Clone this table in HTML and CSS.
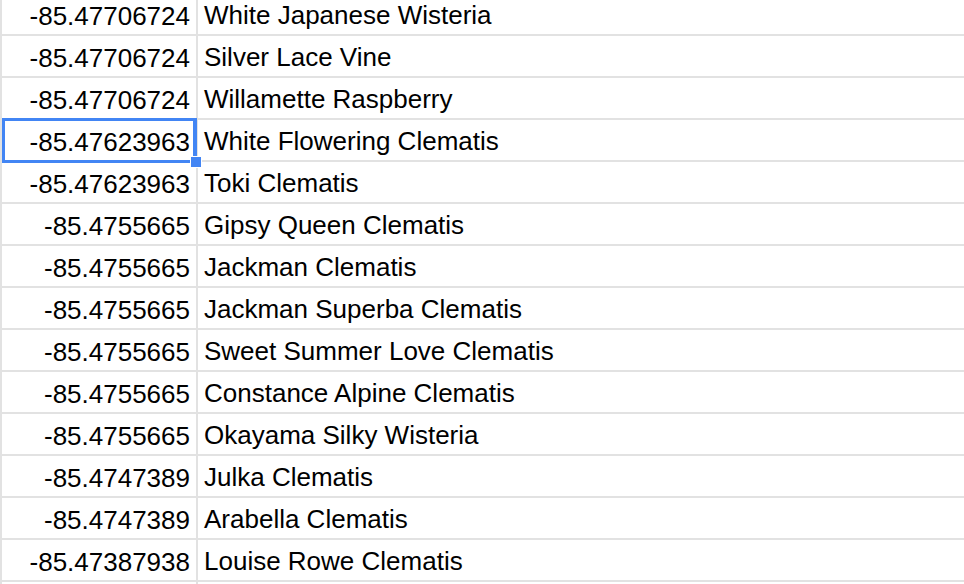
FILE: index.html
```
<!DOCTYPE html>
<html>
<head>
<meta charset="utf-8">
<link rel="stylesheet" href="styles.css">
</head>
<body>
<div class="sheet">
  <div class="row"><div class="cell num">-85.47706724</div><div class="cell txt">White Japanese Wisteria</div></div>
  <div class="row"><div class="cell num">-85.47706724</div><div class="cell txt">Silver Lace Vine</div></div>
  <div class="row"><div class="cell num">-85.47706724</div><div class="cell txt">Willamette Raspberry</div></div>
  <div class="row"><div class="cell num selected">-85.47623963<span class="sel-box"></span><span class="sel-handle"></span></div><div class="cell txt">White Flowering Clematis</div></div>
  <div class="row"><div class="cell num">-85.47623963</div><div class="cell txt">Toki Clematis</div></div>
  <div class="row"><div class="cell num">-85.4755665</div><div class="cell txt">Gipsy Queen Clematis</div></div>
  <div class="row"><div class="cell num">-85.4755665</div><div class="cell txt">Jackman Clematis</div></div>
  <div class="row"><div class="cell num">-85.4755665</div><div class="cell txt">Jackman Superba Clematis</div></div>
  <div class="row"><div class="cell num">-85.4755665</div><div class="cell txt">Sweet Summer Love Clematis</div></div>
  <div class="row"><div class="cell num">-85.4755665</div><div class="cell txt">Constance Alpine Clematis</div></div>
  <div class="row"><div class="cell num">-85.4755665</div><div class="cell txt">Okayama Silky Wisteria</div></div>
  <div class="row"><div class="cell num">-85.4747389</div><div class="cell txt">Julka Clematis</div></div>
  <div class="row"><div class="cell num">-85.4747389</div><div class="cell txt">Arabella Clematis</div></div>
  <div class="row"><div class="cell num">-85.47387938</div><div class="cell txt">Louise Rowe Clematis</div></div>
  <div class="row"><div class="cell num"></div><div class="cell txt"></div></div>
</div>
</body>
</html>
```
FILE: styles.css
```
html, body {
  margin: 0;
  padding: 0;
  background: #ffffff;
  overflow: hidden;
}
body {
  width: 964px;
  height: 584px;
  font-family: "Liberation Sans", Arial, Helvetica, sans-serif;
  font-size: 26px;
  color: #000000;
}
.sheet {
  margin-top: -8px;
  height: 592px;
  overflow: hidden;
  display: flex;
  flex-direction: column;
}
.row {
  display: flex;
  flex: none;
  height: 40px;
  border-top: 2px solid #e2e2e2;
}
.cell {
  display: flex;
  align-items: center;
  height: 40px;
  box-sizing: border-box;
  padding-top: 2px;
  white-space: nowrap;
}
.num {
  box-sizing: content-box;
  width: 188px;
  padding-right: 6px;
  border-left: 2px solid #e2e2e2;
  border-right: 2px solid #e2e2e2;
  justify-content: flex-end;
}
.txt {
  flex: 1;
  padding-left: 6px;
}
.selected {
  position: relative;
}
.sel-box {
  position: absolute;
  left: 0;
  top: -2px;
  right: -1px;
  bottom: -1px;
  border: 3px solid #4285f4;
  border-right-width: 4px;
  pointer-events: none;
}
.sel-handle {
  position: absolute;
  right: -6px;
  bottom: -6px;
  width: 10px;
  height: 10px;
  background: #4285f4;
  border: 1px solid #ffffff;
}
```
